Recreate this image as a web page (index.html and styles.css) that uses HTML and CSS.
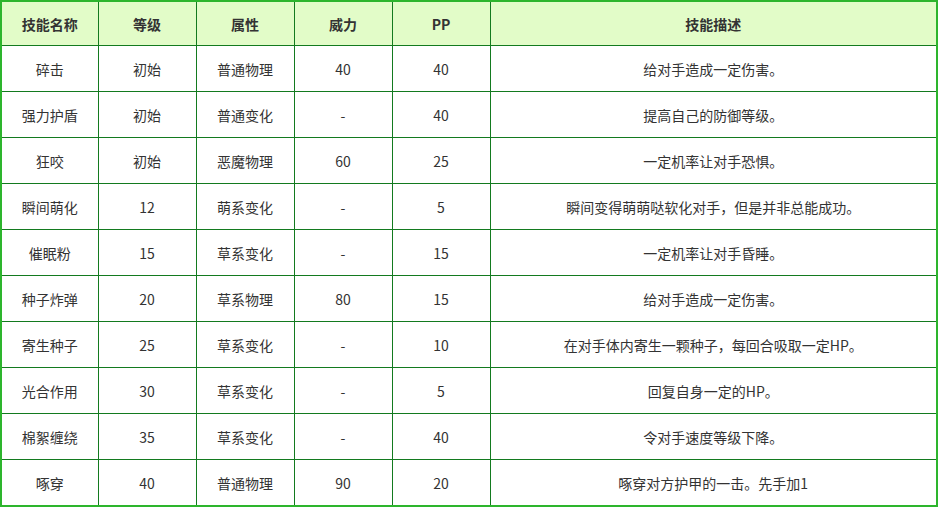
FILE: index.html
```html
<!DOCTYPE html>
<html lang="zh">
<head>
<meta charset="utf-8">
<link rel="stylesheet" href="styles.css">
</head>
<body>
<table class="skills">
  <colgroup>
    <col class="c-name"><col class="c-lv"><col class="c-type"><col class="c-pow"><col class="c-pp"><col class="c-desc">
  </colgroup>
  <thead>
    <tr><th>技能名称</th><th>等级</th><th>属性</th><th>威力</th><th>PP</th><th>技能描述</th></tr>
  </thead>
  <tbody>
    <tr><td>碎击</td><td>初始</td><td>普通物理</td><td>40</td><td>40</td><td>给对手造成一定伤害。</td></tr>
    <tr><td>强力护盾</td><td>初始</td><td>普通变化</td><td>-</td><td>40</td><td>提高自己的防御等级。</td></tr>
    <tr><td>狂咬</td><td>初始</td><td>恶魔物理</td><td>60</td><td>25</td><td>一定机率让对手恐惧。</td></tr>
    <tr><td>瞬间萌化</td><td>12</td><td>萌系变化</td><td>-</td><td>5</td><td>瞬间变得萌萌哒软化对手，但是并非总能成功。</td></tr>
    <tr><td>催眠粉</td><td>15</td><td>草系变化</td><td>-</td><td>15</td><td>一定机率让对手昏睡。</td></tr>
    <tr><td>种子炸弹</td><td>20</td><td>草系物理</td><td>80</td><td>15</td><td>给对手造成一定伤害。</td></tr>
    <tr><td>寄生种子</td><td>25</td><td>草系变化</td><td>-</td><td>10</td><td>在对手体内寄生一颗种子，每回合吸取一定HP。</td></tr>
    <tr><td>光合作用</td><td>30</td><td>草系变化</td><td>-</td><td>5</td><td>回复自身一定的HP。</td></tr>
    <tr><td>棉絮缠绕</td><td>35</td><td>草系变化</td><td>-</td><td>40</td><td>令对手速度等级下降。</td></tr>
    <tr><td>啄穿</td><td>40</td><td>普通物理</td><td>90</td><td>20</td><td>啄穿对方护甲的一击。先手加1</td></tr>
  </tbody>
</table>
</body>
</html>
```

FILE: styles.css
```css
html, body {
  margin: 0;
  padding: 0;
  background: #ffffff;
}
body {
  font-family: "Noto Sans CJK SC", "Noto Sans", sans-serif;
  font-size: 14px;
  color: #333333;
}
.skills {
  width: 938px;
  border-collapse: collapse;
  table-layout: fixed;
  border: 2px solid #2db52d;
}
.c-name { width: 97px; }
.c-lv, .c-type, .c-pow, .c-pp { width: 98px; }
.skills th, .skills td {
  border: 1px solid #137a1f;
  height: 45px;
  padding: 0;
  text-align: center;
  vertical-align: middle;
  line-height: 20px;
}
.skills th {
  height: 43px;
  background: #e2fcc8;
  font-weight: bold;
  color: #333333;
}
.skills td {
  background: #ffffff;
}
```
